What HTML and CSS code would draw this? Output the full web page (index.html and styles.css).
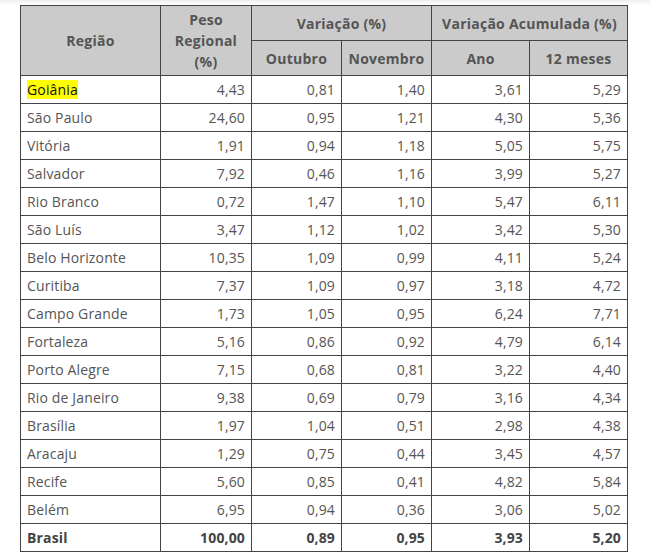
FILE: index.html
```html
<!DOCTYPE html>
<html lang="pt-BR">
<head>
<meta charset="utf-8">
<title>IPCA Regional</title>
<link rel="stylesheet" href="styles.css">
</head>
<body>
<div class="wrap">
<table class="ipca">
  <colgroup>
    <col class="c-reg"><col class="c-peso"><col class="c-out"><col class="c-nov"><col class="c-ano"><col class="c-12">
  </colgroup>
  <thead>
    <tr class="h1">
      <th rowspan="2">Região</th>
      <th rowspan="2">Peso<br>Regional<br>(%)</th>
      <th colspan="2">Variação (%)</th>
      <th colspan="2">Variação Acumulada (%)</th>
    </tr>
    <tr class="h2">
      <th>Outubro</th>
      <th>Novembro</th>
      <th>Ano</th>
      <th>12 meses</th>
    </tr>
  </thead>
  <tbody>
    <tr><td><span class="hl">Goiânia</span></td><td>4,43</td><td>0,81</td><td>1,40</td><td>3,61</td><td>5,29</td></tr>
    <tr><td>São Paulo</td><td>24,60</td><td>0,95</td><td>1,21</td><td>4,30</td><td>5,36</td></tr>
    <tr><td>Vitória</td><td>1,91</td><td>0,94</td><td>1,18</td><td>5,05</td><td>5,75</td></tr>
    <tr><td>Salvador</td><td>7,92</td><td>0,46</td><td>1,16</td><td>3,99</td><td>5,27</td></tr>
    <tr><td>Rio Branco</td><td>0,72</td><td>1,47</td><td>1,10</td><td>5,47</td><td>6,11</td></tr>
    <tr><td>São Luís</td><td>3,47</td><td>1,12</td><td>1,02</td><td>3,42</td><td>5,30</td></tr>
    <tr><td>Belo Horizonte</td><td>10,35</td><td>1,09</td><td>0,99</td><td>4,11</td><td>5,24</td></tr>
    <tr><td>Curitiba</td><td>7,37</td><td>1,09</td><td>0,97</td><td>3,18</td><td>4,72</td></tr>
    <tr><td>Campo Grande</td><td>1,73</td><td>1,05</td><td>0,95</td><td>6,24</td><td>7,71</td></tr>
    <tr><td>Fortaleza</td><td>5,16</td><td>0,86</td><td>0,92</td><td>4,79</td><td>6,14</td></tr>
    <tr><td>Porto Alegre</td><td>7,15</td><td>0,68</td><td>0,81</td><td>3,22</td><td>4,40</td></tr>
    <tr><td>Rio de Janeiro</td><td>9,38</td><td>0,69</td><td>0,79</td><td>3,16</td><td>4,34</td></tr>
    <tr><td>Brasília</td><td>1,97</td><td>1,04</td><td>0,51</td><td>2,98</td><td>4,38</td></tr>
    <tr><td>Aracaju</td><td>1,29</td><td>0,75</td><td>0,44</td><td>3,45</td><td>4,57</td></tr>
    <tr><td>Recife</td><td>5,60</td><td>0,85</td><td>0,41</td><td>4,82</td><td>5,84</td></tr>
    <tr><td>Belém</td><td>6,95</td><td>0,94</td><td>0,36</td><td>3,06</td><td>5,02</td></tr>
    <tr class="total"><td>Brasil</td><td>100,00</td><td>0,89</td><td>0,95</td><td>3,93</td><td>5,20</td></tr>
  </tbody>
</table>
</div>
</body>
</html>
```

FILE: styles.css
```css
html, body {
  margin: 0;
  padding: 0;
  background: #fff;
}

body {
  background: linear-gradient(#ececec 0, #f6f6f6 2px, #ffffff 6px) no-repeat;
  background-size: 100% 8px;
  font-family: "Open Sans", "Liberation Sans", sans-serif;
  font-size: 14px;
  color: #555;
  letter-spacing: 0.15px;
}

.wrap {
  padding: 5px 0 0 20px;
}

.ipca {
  border-collapse: collapse;
  table-layout: fixed;
  width: 607px;
  border: 1px solid #444;
}

.c-reg { width: 140px; }
.c-peso { width: 91px; }
.c-out { width: 90px; }
.c-nov { width: 90px; }
.c-ano { width: 98px; }
.c-12 { width: 98px; }

.ipca th,
.ipca td {
  border: 1px solid #444;
  padding: 0 6px;
}

.ipca th {
  background: #cbcbcb;
  font-weight: 700;
  text-align: center;
  vertical-align: middle;
  line-height: 21px;
  color: #555;
  letter-spacing: 0.25px;
}

.ipca .h1,
.ipca .h2 {
  height: 35px;
}

.ipca tbody tr {
  height: 28px;
}

.ipca td {
  text-align: right;
  line-height: 20px;
  vertical-align: middle;
}

.ipca td:first-child {
  text-align: left;
}

.hl {
  background: #ffff00;
  color: #111;
}

.total td {
  font-weight: 700;
  color: #444;
}
```
